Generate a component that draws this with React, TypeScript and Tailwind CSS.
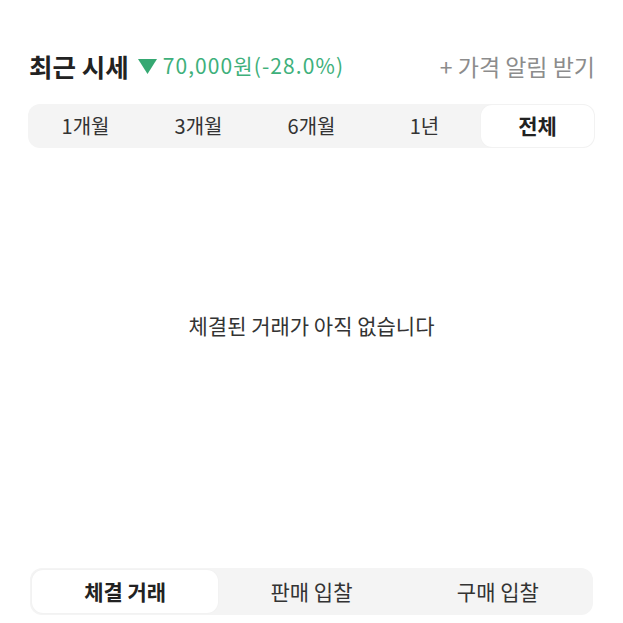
const PERIODS = ["1개월", "3개월", "6개월", "1년", "전체"];
const TRADE_TABS = ["체결 거래", "판매 입찰", "구매 입찰"];

export default function App() {
  const activePeriod = "전체";
  const activeTrade = "체결 거래";

  return (
    <div
      className="flex h-[623px] w-[623px] flex-col bg-white pl-[28px] pr-[28px] text-[#222]"
      style={{ fontFamily: '"Noto Sans CJK KR", "Noto Sans", sans-serif' }}
    >
      <div className="mt-[49px] flex h-[34px] items-center justify-between">
        <div className="flex items-center">
          <span className="ml-[1px] text-[25.5px] font-bold text-[#222]">최근 시세</span>
          <span className="ml-[9px] flex items-center text-[21px] tracking-[1.1px] text-[#3eb07b]">
            <svg width="19" height="15" viewBox="0 0 19 15" className="mr-[6px]">
              <polygon points="0,0 19,0 9.5,15" fill="#35a872" />
            </svg>
            70,000원(-28.0%)
          </span>
        </div>
        <span className="text-[23px] text-[#8c8c8c]">+ 가격 알림 받기</span>
      </div>

      <div className="mt-[21px] flex h-[44px] items-center rounded-[12px] bg-[#f4f4f4] p-[1px]">
        {PERIODS.map((p) => (
          <button
            key={p}
            type="button"
            className={`flex h-full flex-1 items-center justify-center rounded-[11px] ${
              p === activePeriod
                ? "bg-white text-[21px] font-bold text-[#222] shadow-[0_0_2px_rgba(0,0,0,0.04)]"
                : "text-[20px] text-[#333]"
            }`}
          >
            {p}
          </button>
        ))}
      </div>

      <div className="mt-[161px] flex justify-center">
        <span className="text-[21px] leading-[32px] text-[#333]">체결된 거래가 아직 없습니다</span>
      </div>

      <div className="flex-1" />

      <div className="mb-[8px] ml-[2px] mr-[2px] flex h-[47px] items-center rounded-[12px] bg-[#f4f4f4] p-[2px]">
        {TRADE_TABS.map((t) => (
          <button
            key={t}
            type="button"
            className={`flex h-full flex-1 items-center justify-center rounded-[11px] text-[21px] ${
              t === activeTrade
                ? "bg-white font-bold text-[#222] shadow-[0_0_2px_rgba(0,0,0,0.04)]"
                : "text-[#333]"
            }`}
          >
            {t}
          </button>
        ))}
      </div>
    </div>
  );
}
